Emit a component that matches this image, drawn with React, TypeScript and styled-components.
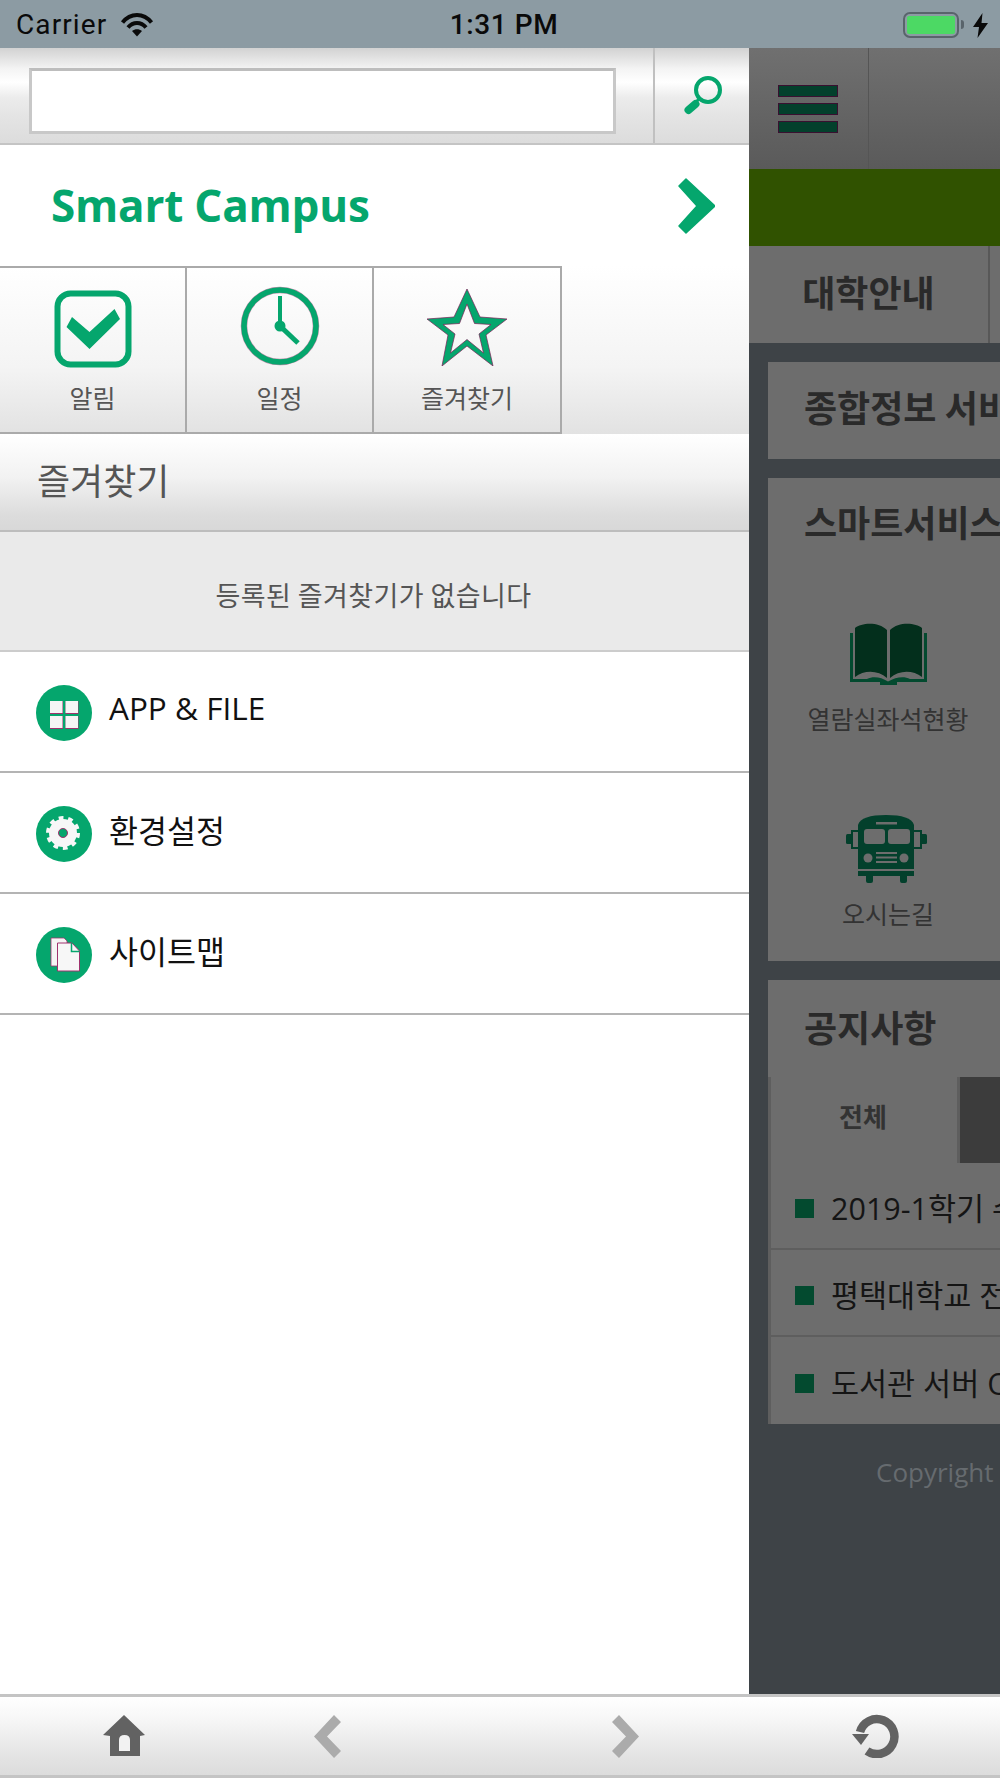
import React from "react";
import styled, { createGlobalStyle } from "styled-components";

const G = "#05a66d";
const FR = "#7b2156";
const SANS = `"Open Sans", "Noto Sans CJK KR", sans-serif`;
const KR = `"Noto Sans CJK KR", "Noto Sans", sans-serif`;

const Global = createGlobalStyle`
  html, body { margin: 0; padding: 0; background: #fff; }
  * { box-sizing: border-box; }
`;

const Page = styled.div`
  width: 1000px; height: 1778px; overflow: hidden;
  display: flex; flex-direction: column; font-family: ${KR};
`;

/* status bar */
const Status = styled.div`
  height: 48px; flex: none; background: #8c9ba3; color: #0a0a0a;
  display: grid; grid-template-columns: 1fr auto 1fr; align-items: center; padding: 2px 12px 0 16px;
  font-family: "Roboto", sans-serif; font-size: 28px; line-height: 46px;
`;
const StatusLeft = styled.div`display: flex; align-items: center; gap: 13px; letter-spacing: 1.100px;`;
const StatusTime = styled.div`font-size: 28px; font-weight: 500; letter-spacing: .6px; margin-left: 4px;`;
const StatusRight = styled.div`display: flex; align-items: center; justify-content: flex-end; gap: 14px;`;
const Battery = styled.div`
  width: 56px; height: 26px; border: 2.5px solid #59646b; border-radius: 7px; padding: 2px;
  position: relative;
  &::after {
    content: ""; position: absolute; right: -7px; top: 6px; width: 3px; height: 9px;
    background: #59646b; border-radius: 0 3px 3px 0;
  }
`;
const BatteryFill = styled.div`width: 100%; height: 100%; background: #4cd964; border-radius: 2px;`;

/* shell */
const Middle = styled.div`flex: 1; min-height: 0; display: flex;`;
const Drawer = styled.aside`width: 749px; flex: none; background: #fff; display: flex; flex-direction: column;`;
const Main = styled.main`flex: 1; min-width: 0; overflow: hidden; background: #3e4347; white-space: nowrap;`;

/* search */
const SearchBar = styled.div`
  height: 97px; flex: none; display: flex; border-bottom: 2px solid #c4c4c4;
  background: linear-gradient(#d2d2d2 0%, #f4f4f4 22%, #ffffff 36%, #ececec 52%, #e4e4e4 72%, #dcdcdc 100%);
`;
const SearchField = styled.div`flex: 1; padding: 20px 37px 9px 29px;`;
const SearchInput = styled.div`
  height: 66px; background: #fff; border: 3px solid #c8c8c8; border-top-color: #bdbdbd;
`;
const SearchButton = styled.div`
  width: 96px; flex: none; border-left: 2px solid #c0c0c0;
  display: flex; align-items: center; padding: 0 0 0 28px; height: 95px;
`;

/* title */
const TitleRow = styled.div`
  height: 121px; flex: none; display: flex; align-items: center; justify-content: space-between;
  padding: 0 34px 0 51px;
`;
const Title = styled.h1`
  margin: 0; font-family: "Open Sans", sans-serif; font-size: 44px; font-weight: 700; color: ${G};
  line-height: 1; position: relative; top: -1px; letter-spacing: -.2px;
`;

/* quick tabs */
const Quick = styled.div`
  height: 168px; flex: none; display: flex;
  background: linear-gradient(#ffffff 0%, #f4f4f4 60%, #e2e2e2 100%);
`;
const QuickCell = styled.div<{ $w: number }>`
  width: ${p => p.$w}px; height: 168px; flex: none; border: 2px solid #aaaaaa; border-left: none;
  display: flex; flex-direction: column; align-items: center; padding-top: 20px;
`;
const QuickIcon = styled.div<{ $lift?: number }>`
  height: 82px; display: flex; align-items: center; justify-content: center;
  transform: translateY(${p => -(p.$lift ?? 0)}px);
`;
const QuickLabel = styled.div`font-size: 25px; line-height: 32px; color: #555; margin-top: 11px;`;

/* favourites */
const Section = styled.div`
  height: 98px; flex: none; display: flex; align-items: center; padding: 0 37px 7px;
  font-size: 36px; color: #555; border-bottom: 2px solid #bdbdbd;
  background: linear-gradient(#ffffff 0%, #f2f2f2 45%, #dcdcdc 85%, #d8d8d8 100%);
`;
const Empty = styled.div`
  height: 120px; flex: none; background: #eaeaea; border-bottom: 2px solid #cccccc;
  display: flex; align-items: center; justify-content: center; padding: 6px 2px 0 0;
  font-size: 27px; color: #555; letter-spacing: .4px;
`;
const MenuRow = styled.div`
  height: 121px; flex: none; display: flex; align-items: center; gap: 17px; padding: 2px 0 0 36px;
  border-bottom: 2px solid #b4b4b4; font-family: ${SANS}; font-size: 31.500px; color: #111;
`;
const MenuLabel = styled.span`position: relative; top: -5px;`;

/* main */
const AppHeader = styled.div`
  height: 121px; display: flex;
  background: linear-gradient(#707070, #5a5a5a);
`;
const BurgerCell = styled.div`
  width: 120px; flex: none; border-right: 1px solid #555;
  display: flex; flex-direction: column; gap: 8px; padding: 38px 0 0 30px;
`;
const BurgerBar = styled.span`
  display: block; width: 58px; height: 10px; background: #03402c; box-shadow: 0 0 0 1px #3a1030;
`;
const Banner = styled.div`height: 77px; background: #305200;`;
const NavTabs = styled.div`height: 97px; display: flex; background: #6d6d6d;`;
const NavTab = styled.div`
  width: 241px; flex: none; border-right: 2px solid #585858;
  display: flex; align-items: center; justify-content: center; padding: 0 0 8px 0;
  font-size: 36px; font-weight: 700; color: #2a2a2a;
`;
const Cards = styled.div`display: flex; flex-direction: column; gap: 19px; padding: 19px 0 0 19px;`;
const Card = styled.section<{ $h: number }>`
  width: 400px; height: ${p => p.$h}px; flex: none; background: #6d6d6d;
`;
const CardTitle = styled.h2<{ $h: number; $pad: number }>`
  margin: 0; height: ${p => p.$h}px; display: flex; align-items: center; padding: 0 0 ${p => p.$pad}px 36px;
  font-size: 36px; font-weight: 700; color: #2a2a2a;
`;
const Services = styled.div`display: flex; flex-direction: column; padding-top: 46px; width: 240px;`;
const Service = styled.div`height: 195px; display: flex; flex-direction: column; align-items: center;`;
const ServiceIcon = styled.div`height: 70px; display: flex; align-items: center; justify-content: center;`;
const BusIconBox = styled(ServiceIcon)`margin-right: 4px;`;
const ServiceLabel = styled.div`font-size: 25px; line-height: 34px; margin-top: 12px; color: #333;`;
const NoticeTabs = styled.div`height: 86px; display: flex; border-left: 3px solid #5e5e5e;`;
const NoticeTab = styled.div`
  width: 186px; flex: none; display: flex; align-items: center; justify-content: center; padding: 0 2px 9px 0;
  font-size: 26px; font-weight: 700; color: #333;
`;
const NoticeTabDark = styled.div`flex: 1; background: #3c3c3c; border-left: 3px solid #5e5e5e;`;
const NoticeRow = styled.div<{ $last?: boolean }>`
  height: 87px; display: flex; align-items: center; gap: 17px; padding: 3px 0 0 24px;
  border-left: 3px solid #5e5e5e; border-bottom: ${p => (p.$last ? "none" : "2px solid #5e5e5e")};
  font-family: ${SANS}; font-size: 30.500px; color: #151515;
`;
const Square = styled.span`width: 19px; height: 19px; flex: none; background: #034a2f; margin-top: 3px;`;
const Copy = styled.div`
  font-family: "Open Sans", sans-serif; font-size: 26px; color: #666b6f; padding: 28px 0 0 127px; line-height: 40px;
`;

/* bottom */
const BottomBar = styled.nav`
  height: 84px; flex: none; display: grid; grid-template-columns: 248px 158px 438px 64px;
  justify-items: center; align-items: center;
  border-top: 3px solid #c4c4c4; border-bottom: 3px solid #c4c4c4;
  background: linear-gradient(#ffffff 0%, #f6f6f6 30%, #e4e4e4 75%, #dcdcdc 100%);
`;

const Wifi = () => (
  <svg width="34" height="24" viewBox="0 0 33 24">
    <path d="M2 9.500C10-.5 23-.5 31 9.500" fill="none" stroke="#0a0a0a" strokeWidth="4" />
    <path d="M7.500 14.500C12.500 8.500 20.500 8.500 25.500 14.500" fill="none" stroke="#0a0a0a" strokeWidth="4" />
    <path d="M11.500 18C14.500 15.500 18.500 15.500 21.500 18L16.500 23.500Z" fill="#0a0a0a" />
  </svg>
);
const Bolt = () => (
  <svg width="15" height="25" viewBox="0 0 15 25">
    <path d="M9.500 0 0 14h6L4.500 25 15 10H8.500Z" fill="#0a0a0a" />
  </svg>
);
const SearchIcon = () => (
  <svg width="40" height="40" viewBox="0 0 40 40">
    <circle cx="25" cy="14" r="12" fill="none" stroke={G} strokeWidth="4" />
    <path d="M15.500 23.500 L12 27" stroke={G} strokeWidth="3" />
    <path d="M12.500 28 L5.500 34" stroke={G} strokeWidth="8" strokeLinecap="round" />
  </svg>
);
const Chevron = () => (
  <svg width="37" height="56" viewBox="0 0 37 56">
    <path d="M8 1 37 28 8 55 1 48 19 28 1 8Z" fill={G} stroke={G} strokeWidth="1.500" strokeLinejoin="round" />
  </svg>
);
const CheckIcon = () => (
  <svg width="78" height="78" viewBox="0 0 78 78">
    <rect x="3.500" y="3.500" width="71" height="71" rx="13" fill="none" stroke={G} strokeWidth="6" />
    <path d="M12.500 37 35.500 59 66 29 60.500 19 35.500 42 18 27Z" fill={G} />
  </svg>
);
const ClockIcon = () => (
  <svg width="80" height="80" viewBox="0 0 80 80">
    <circle cx="40" cy="40" r="36" fill="none" stroke={FR} strokeOpacity=".5" strokeWidth="6.500" />
    <circle cx="40" cy="40" r="36" fill="none" stroke={G} strokeWidth="5.500" />
    <path d="M40 10V40" stroke={G} strokeWidth="4" />
    <path d="M40 40 58 57" stroke={G} strokeWidth="5" />
    <circle cx="40" cy="40" r="5.500" fill={G} />
  </svg>
);
const StarIcon = () => (
  <svg width="80" height="77" viewBox="0 0 80 77">
    <path
      fillRule="evenodd"
      d="M40 0 53 28 80 30 59 46 66 77 40 57 15 77 21 46 0 30 27 28ZM40 15 32.500 34.500 16 35.500 28 45 23.500 64 40 50.500 56.500 64 52 45 64 35.500 47.500 34.500Z"
      fill={G}
      stroke={FR}
      strokeOpacity=".8"
      strokeWidth=".9"
    />
  </svg>
);
const Dot = styled.svg`flex: none;`;
const GridIcon = () => (
  <Dot width="56" height="56" viewBox="0 0 56 56">
    <circle cx="28" cy="28" r="28" fill={G} />
    <path d="M14 16h13v13H14zM29.500 16h13v13h-13zM14 31h13v13H14zM29.500 31h13v13h-13z" fill="#a0326e" />
    <path d="M14 16h12.500v12H14zM29.500 16H42v12H29.500zM14 31h12.500v12H14zM29.500 31H42v12H29.500z" fill="#f5f5f5" />
  </Dot>
);
const GearIcon = () => (
  <Dot width="56" height="56" viewBox="0 0 56 56">
    <circle cx="28" cy="28" r="28" fill={G} />
    <circle cx="27" cy="27" r="14" fill="#f7f7f7" />
    <circle cx="27" cy="27" r="15" fill="none" stroke="#f7f7f7" strokeWidth="4" strokeDasharray="4.712 4.712" />
    <circle cx="27" cy="27" r="4.500" fill={G} stroke="#a0326e" strokeWidth="1" />
  </Dot>
);
const DocsIcon = () => (
  <Dot width="56" height="56" viewBox="0 0 56 56">
    <circle cx="28" cy="28" r="28" fill={G} />
    <path d="M15 11h13l3 3v25H15z" fill="#f5f5f5" stroke="#a0326e" strokeWidth=".8" />
    <path d="M21.500 16H36l7.500 8v20h-22z" fill="#f7f7f7" stroke="#a0326e" strokeWidth="1" />
    <path d="M35.500 16v8.500h8" fill="none" stroke={G} strokeWidth="1.500" />
  </Dot>
);
const BookIcon = () => (
  <svg width="77" height="62" viewBox="0 0 77 62">
    <path
      d="M5 5C11 0 28-2 37 7V55C28 47 14 47 5 54ZM72 5C66 0 49-2 40 7V55C49 47 63 47 72 54Z"
      fill="#032f1c"
    />
    <path
      d="M0 10H3V56H17C23 53 31 54 38 58.500C46 54 54 53 60 56H74V10H77V59H47V62H30V59H0Z"
      fill="#034a2f"
    />
  </svg>
);
const BusIcon = () => (
  <svg width="81" height="68" viewBox="0 0 81 68">
    <path d="M12 10C14 3 24 0 40 0S66 3 68 10V54H12Z" fill="#03402c" />
    <path d="M12 56H68V61H61V66Q61 68 59 68H56Q54 68 54 66V61H27V66Q27 68 25 68H22Q20 68 20 66V61H12Z" fill="#03402c" />
    <path d="M7 15H14V17H7V32H14V34H5V15ZM67 15H76V34H67V32H74V17H67Z" fill="#03402c" />
    <rect x="0" y="19" width="7" height="10" rx="1.500" fill="#03402c" />
    <rect x="74" y="19" width="7" height="10" rx="1.500" fill="#03402c" />
    <rect x="18" y="14" width="21" height="15" rx="3" fill="#6d6d6d" />
    <rect x="42" y="14" width="22" height="15" rx="3" fill="#6d6d6d" />
    <rect x="30" y="7" width="21" height="2.500" fill="#6d6d6d" />
    <circle cx="22" cy="43" r="4.500" fill="#6d6d6d" />
    <circle cx="58" cy="43" r="4.500" fill="#6d6d6d" />
    <path d="M30 37H51V39H30zM30 41.500H51V43.500H30zM30 46H51V48H30z" fill="#6d6d6d" />
  </svg>
);
const HomeIcon = () => (
  <svg width="42" height="42" viewBox="0 0 42 42">
    <path d="M21 0 42 20 37 21V41H7V21L0 20Z" fill="#626262" />
    <path d="M16 36V25Q16 20 21.500 20T27 25V36Z" fill="#f2f2f2" />
  </svg>
);
const BackIcon = () => (
  <svg width="27" height="43" viewBox="0 0 27 43">
    <path d="M20 0 27 7 13 21.500 27 36 20 43 0 21.500Z" fill="#ababab" />
  </svg>
);
const ForwardIcon = () => (
  <svg width="27" height="43" viewBox="0 0 27 43">
    <path d="M7 0 0 7 14 21.500 0 36 7 43 27 21.500Z" fill="#ababab" />
  </svg>
);
const RefreshIcon = () => (
  <svg width="48" height="44" viewBox="0 0 48 44">
    <path d="M8 18A17.500 17.500 0 1 1 15 37" fill="none" stroke="#626262" strokeWidth="8.500" />
    <path d="M0 20H17L9 31Z" fill="#626262" />
  </svg>
);

export default function App() {
  return (
    <Page>
      <Global />
      <Status>
        <StatusLeft>Carrier<Wifi /></StatusLeft>
        <StatusTime>1:31 PM</StatusTime>
        <StatusRight>
          <Battery><BatteryFill /></Battery>
          <Bolt />
        </StatusRight>
      </Status>
      <Middle>
        <Drawer>
          <SearchBar>
            <SearchField><SearchInput /></SearchField>
            <SearchButton><SearchIcon /></SearchButton>
          </SearchBar>
          <TitleRow>
            <Title>Smart Campus</Title>
            <Chevron />
          </TitleRow>
          <Quick>
            <QuickCell $w={187}><QuickIcon><CheckIcon /></QuickIcon><QuickLabel>알림</QuickLabel></QuickCell>
            <QuickCell $w={187}><QuickIcon $lift={3}><ClockIcon /></QuickIcon><QuickLabel>일정</QuickLabel></QuickCell>
            <QuickCell $w={188}><QuickIcon $lift={2}><StarIcon /></QuickIcon><QuickLabel>즐겨찾기</QuickLabel></QuickCell>
          </Quick>
          <Section>즐겨찾기</Section>
          <Empty>등록된 즐겨찾기가 없습니다</Empty>
          <MenuRow><GridIcon /><MenuLabel>APP &amp; FILE</MenuLabel></MenuRow>
          <MenuRow><GearIcon /><MenuLabel>환경설정</MenuLabel></MenuRow>
          <MenuRow><DocsIcon /><MenuLabel>사이트맵</MenuLabel></MenuRow>
        </Drawer>
        <Main>
          <AppHeader>
            <BurgerCell><BurgerBar /><BurgerBar /><BurgerBar /></BurgerCell>
          </AppHeader>
          <Banner />
          <NavTabs><NavTab>대학안내</NavTab></NavTabs>
          <Cards>
            <Card $h={97}><CardTitle $h={97} $pad={9}>종합정보 서비스</CardTitle></Card>
            <Card $h={483}>
              <CardTitle $h={95} $pad={9}>스마트서비스</CardTitle>
              <Services>
                <Service><ServiceIcon><BookIcon /></ServiceIcon><ServiceLabel>열람실좌석현황</ServiceLabel></Service>
                <Service><BusIconBox><BusIcon /></BusIconBox><ServiceLabel>오시는길</ServiceLabel></Service>
              </Services>
            </Card>
            <Card $h={444}>
              <CardTitle $h={97} $pad={6}>공지사항</CardTitle>
              <NoticeTabs><NoticeTab>전체</NoticeTab><NoticeTabDark /></NoticeTabs>
              <NoticeRow><Square />2019-1학기 수</NoticeRow>
              <NoticeRow><Square />평택대학교 전</NoticeRow>
              <NoticeRow $last><Square />도서관 서버 O</NoticeRow>
            </Card>
          </Cards>
          <Copy>Copyright</Copy>
        </Main>
      </Middle>
      <BottomBar>
        <HomeIcon />
        <BackIcon />
        <ForwardIcon />
        <RefreshIcon />
      </BottomBar>
    </Page>
  );
}
